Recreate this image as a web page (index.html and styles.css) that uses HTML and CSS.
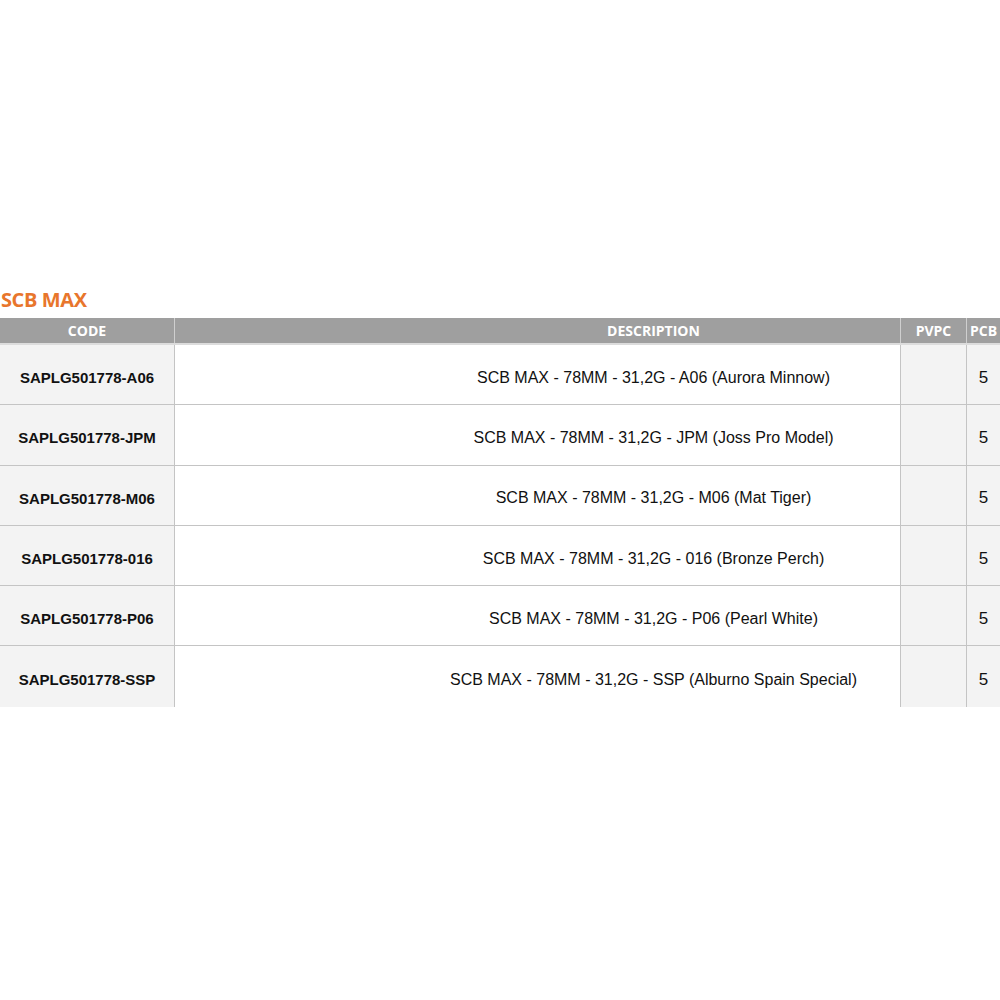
FILE: index.html
```html
<!DOCTYPE html>
<html>
<head>
<meta charset="utf-8">
<link rel="stylesheet" href="styles.css">
</head>
<body>
<div class="page">
  <h1 class="title">SCB MAX</h1>
  <div class="table">
    <div class="row head">
      <div class="cell">CODE</div>
      <div class="cell desc">DESCRIPTION</div>
      <div class="cell">PVPC</div>
      <div class="cell">PCB</div>
    </div>
    <div class="row">
      <div class="cell code">SAPLG501778-A06</div>
      <div class="cell desc">SCB MAX - 78MM - 31,2G - A06 (Aurora Minnow)</div>
      <div class="cell shade"></div>
      <div class="cell shade num">5</div>
    </div>
    <div class="row">
      <div class="cell code">SAPLG501778-JPM</div>
      <div class="cell desc">SCB MAX - 78MM - 31,2G - JPM (Joss Pro Model)</div>
      <div class="cell shade"></div>
      <div class="cell shade num">5</div>
    </div>
    <div class="row">
      <div class="cell code">SAPLG501778-M06</div>
      <div class="cell desc">SCB MAX - 78MM - 31,2G - M06 (Mat Tiger)</div>
      <div class="cell shade"></div>
      <div class="cell shade num">5</div>
    </div>
    <div class="row">
      <div class="cell code">SAPLG501778-016</div>
      <div class="cell desc">SCB MAX - 78MM - 31,2G - 016 (Bronze Perch)</div>
      <div class="cell shade"></div>
      <div class="cell shade num">5</div>
    </div>
    <div class="row">
      <div class="cell code">SAPLG501778-P06</div>
      <div class="cell desc">SCB MAX - 78MM - 31,2G - P06 (Pearl White)</div>
      <div class="cell shade"></div>
      <div class="cell shade num">5</div>
    </div>
    <div class="row last">
      <div class="cell code">SAPLG501778-SSP</div>
      <div class="cell desc">SCB MAX - 78MM - 31,2G - SSP (Alburno Spain Special)</div>
      <div class="cell shade"></div>
      <div class="cell shade num">5</div>
    </div>
  </div>
</div>
</body>
</html>
```

FILE: styles.css
```css
* { box-sizing: border-box; }
html, body { margin: 0; padding: 0; background: #ffffff; }
.page {
  width: 1000px;
  height: 1000px;
  padding-top: 288px;
  overflow: hidden;
}
.title {
  margin: 0 0 6px 1px;
  font-family: "Open Sans", sans-serif;
  font-weight: 700;
  font-size: 20px;
  line-height: 24px;
  letter-spacing: -0.4px;
  color: #e8762c;
}
.table { width: 1000px; }
.row {
  display: grid;
  grid-template-columns: 174px 726px 66px 34px;
  height: 60.3px;
  border-bottom: 1px solid #c4c4c4;
}
.row.last { border-bottom: none; }
.cell {
  display: flex;
  align-items: center;
  justify-content: center;
  padding-top: 6px;
  font-family: "Liberation Sans", Arial, sans-serif;
  font-size: 15px;
  color: #111;
  white-space: nowrap;
}
.cell + .cell { border-left: 1px solid #c4c4c4; }
.row.head {
  height: 27px;
  background: #9f9f9f;
  border-bottom: 2px solid #dcdcdc;
}
.row.head .cell {
  padding-top: 0;
  font-family: "Open Sans", sans-serif;
  font-weight: 700;
  font-size: 14px;
  color: #ffffff;
}
.row.head .cell + .cell { border-left: 1px solid #cfcfcf; }
.desc { padding-left: 232px; font-size: 16px; }
.row.head .desc { padding-left: 232px; }
.code {
  background: #f3f3f3;
  font-weight: 700;
}
.shade { background: #f3f3f3; }
.num { font-size: 17px; }
```
